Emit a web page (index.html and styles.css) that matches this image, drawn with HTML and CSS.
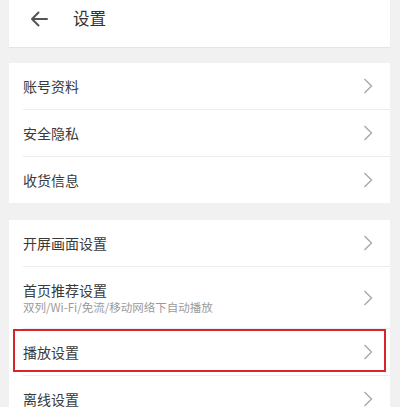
FILE: index.html
```html
<!DOCTYPE html>
<html lang="zh">
<head>
<meta charset="utf-8">
<link rel="stylesheet" href="styles.css">
</head>
<body>
<div class="page">
  <header class="header">
    <svg class="back" width="18" height="16" viewBox="0 0 18 16"><path d="M17 8H2M8.5 1.5L2 8l6.5 6.5" fill="none" stroke="#555" stroke-width="2" stroke-linecap="round" stroke-linejoin="round"/></svg>
    <span class="title">设置</span>
  </header>

  <section class="card">
    <div class="row"><span class="label">账号资料</span><svg class="chev" width="10" height="16" viewBox="0 0 10 16"><polyline points="1.5,1 8.5,8 1.5,15" fill="none" stroke="#a8a8a8" stroke-width="1.4"/></svg></div>
    <div class="divider"></div>
    <div class="row"><span class="label">安全隐私</span><svg class="chev" width="10" height="16" viewBox="0 0 10 16"><polyline points="1.5,1 8.5,8 1.5,15" fill="none" stroke="#a8a8a8" stroke-width="1.4"/></svg></div>
    <div class="divider"></div>
    <div class="row"><span class="label">收货信息</span><svg class="chev" width="10" height="16" viewBox="0 0 10 16"><polyline points="1.5,1 8.5,8 1.5,15" fill="none" stroke="#a8a8a8" stroke-width="1.4"/></svg></div>
  </section>

  <section class="card">
    <div class="row"><span class="label">开屏画面设置</span><svg class="chev" width="10" height="16" viewBox="0 0 10 16"><polyline points="1.5,1 8.5,8 1.5,15" fill="none" stroke="#a8a8a8" stroke-width="1.4"/></svg></div>
    <div class="divider"></div>
    <div class="row tall">
      <div class="texts">
        <span class="label">首页推荐设置</span>
        <span class="sub">双列/Wi-Fi/免流/移动网络下自动播放</span>
      </div>
      <svg class="chev" width="10" height="16" viewBox="0 0 10 16"><polyline points="1.5,1 8.5,8 1.5,15" fill="none" stroke="#a8a8a8" stroke-width="1.4"/></svg>
    </div>
    <div class="divider"></div>
    <div class="row highlight"><span class="label">播放设置</span><svg class="chev" width="10" height="16" viewBox="0 0 10 16"><polyline points="1.5,1 8.5,8 1.5,15" fill="none" stroke="#a8a8a8" stroke-width="1.4"/></svg></div>
    <div class="divider"></div>
    <div class="row"><span class="label">离线设置</span><svg class="chev" width="10" height="16" viewBox="0 0 10 16"><polyline points="1.5,1 8.5,8 1.5,15" fill="none" stroke="#a8a8a8" stroke-width="1.4"/></svg></div>
  </section>
</div>
</body>
</html>
```
FILE: styles.css
```css
html, body {
  margin: 0;
  padding: 0;
  background: #f1f1f1;
  font-family: "Noto Sans CJK SC", "Noto Sans", sans-serif;
}
.page {
  padding: 0 10px 0 9px;
  display: flex;
  flex-direction: column;
  gap: 16px;
}
.header {
  height: 47px;
  background: #fff;
  display: flex;
  align-items: center;
  padding-left: 21px;
  padding-bottom: 11px;
  box-sizing: border-box;
  box-shadow: 0 1px 1px rgba(0,0,0,0.05);
}
.back {
  display: block;
  margin-top: 2px;
}
.title {
  margin-left: 25px;
  font-size: 16.5px;
  color: #333;
  line-height: 20px;
}
.card {
  background: #fff;
  display: flex;
  flex-direction: column;
}
.card + .card {
  margin-top: 1px;
}
.row {
  height: 46px;
  display: flex;
  align-items: center;
  justify-content: space-between;
  padding: 0 17px 0 14px;
  position: relative;
}
.row.tall {
  height: 61px;
}
.label {
  font-size: 14px;
  color: #3a3a3a;
  line-height: 16px;
}
.texts {
  display: flex;
  flex-direction: column;
  gap: 2px;
}
.sub {
  font-size: 11.5px;
  color: #9a9a9a;
  line-height: 14px;
}
.chev {
  display: block;
}
.divider {
  height: 1px;
  background: #ececec;
  margin-left: 14px;
}
.highlight::after {
  content: "";
  position: absolute;
  left: 4px;
  right: 4px;
  top: 0;
  height: 43px;
  border: 2px solid #d8242c;
  box-sizing: border-box;
  pointer-events: none;
}
```
